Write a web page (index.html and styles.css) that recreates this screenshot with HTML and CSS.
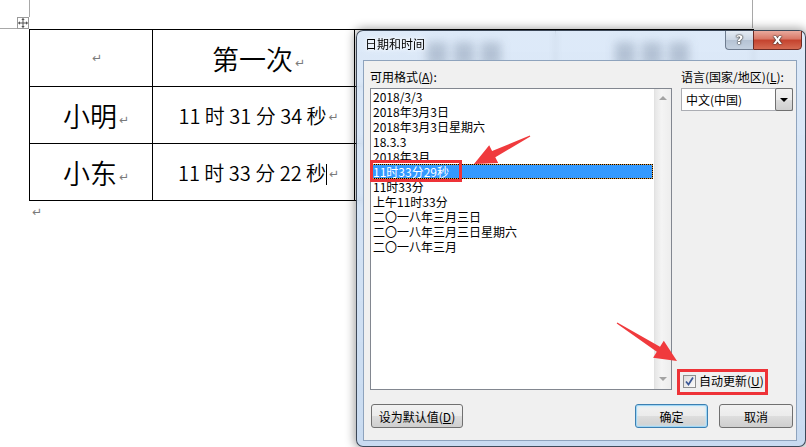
FILE: index.html
```html
<!DOCTYPE html>
<html lang="zh-CN">
<head>
    <meta charset="UTF-8">
    <title>日期和时间</title>
    <link rel="stylesheet" href="styles.css">
</head>
<body>
    <div class="page">
        <div class="margin-line tl-v"></div>
        <div class="margin-line tl-h"></div>
        <div class="margin-line tr-v"></div>

        <div class="table-wrap">
            <div class="move-handle">
                <svg width="10" height="10" viewBox="0 0 10 10">
                    <path d="M5 0.5 V9.5 M0.5 5 H9.5" stroke="#555" stroke-width="1" fill="none"/>
                    <path d="M5 0 L3.3 2 H6.7 Z M5 10 L3.3 8 H6.7 Z M0 5 L2 3.3 V6.7 Z M10 5 L8 3.3 V6.7 Z" fill="#555"/>
                </svg>
            </div>
            <table class="doc-table">
                <colgroup>
                    <col class="c1"><col class="c2"><col class="c3"><col class="c4">
                </colgroup>
                <tr>
                    <td><span class="pm">↵</span></td>
                    <td class="big">第一次<span class="pm">↵</span></td>
                    <td></td>
                    <td></td>
                </tr>
                <tr>
                    <td class="big">小明<span class="pm">↵</span></td>
                    <td class="time">11 时 31 分 34 秒<span class="pm">↵</span></td>
                    <td></td>
                    <td></td>
                </tr>
                <tr>
                    <td class="big">小东<span class="pm">↵</span></td>
                    <td class="time">11 时 33 分 22 秒<span class="caret"></span><span class="pm">↵</span></td>
                    <td></td>
                    <td></td>
                </tr>
            </table>
        </div>
        <p class="after">↵</p>
    </div>

    <div class="dialog">
        <div class="titlebar">
            <span class="ghost ghost-a"></span>
            <span class="ghost ghost-b"></span>
            <span class="title">日期和时间</span>
            <div class="caption">
                <span class="cap help">?</span>
                <span class="cap close">x</span>
            </div>
        </div>
        <div class="client">
            <div class="columns">
                <div class="col-left">
                    <div class="label">可用格式(<u>A</u>):</div>
                    <div class="listbox">
                        <ul class="items">
                            <li>2018/3/3</li>
                            <li>2018年3月3日</li>
                            <li>2018年3月3日星期六</li>
                            <li>18.3.3</li>
                            <li>2018年3月</li>
                            <li class="sel">11时33分29秒</li>
                            <li>11时33分</li>
                            <li>上午11时33分</li>
                            <li>二〇一八年三月三日</li>
                            <li>二〇一八年三月三日星期六</li>
                            <li>二〇一八年三月</li>
                        </ul>
                        <div class="vscroll">
                            <span class="arrow-up"></span>
                            <span class="arrow-down"></span>
                        </div>
                    </div>
                </div>
                <div class="col-right">
                    <div class="label">语言(国家/地区)(<u>L</u>):</div>
                    <div class="combo">
                        <span class="combo-text">中文(中国)</span>
                        <span class="drop"><span class="drop-arrow"></span></span>
                    </div>
                    <div class="check">
                        <span class="checkbox">
                            <svg width="11" height="11" viewBox="0 0 11 11">
                                <path d="M2 5.5 L4.5 8.5 L9 1.5" stroke="#3a5796" stroke-width="1.7" fill="none"/>
                            </svg>
                        </span>
                        <span>自动更新(<u>U</u>)</span>
                    </div>
                </div>
            </div>
            <div class="buttons">
                <span class="btn btn-wide">设为默认值(<u>D</u>)</span>
                <span class="btn btn-ok">确定</span>
                <span class="btn btn-cancel">取消</span>
            </div>
        </div>
    </div>

    <div class="callout callout-sel"></div>
    <div class="callout callout-check"></div>
    <svg class="arrows" width="806" height="447" viewBox="0 0 806 447">
        <polygon points="529.8,135.6 492.1,151.1 489.2,145.3 474,164 498.2,163.1 495.3,157.3 530.3,136.5" />
        <polygon points="617.3,322.6 660,346.7 663.8,340.8 677,361 653.1,357.7 656.8,351.7 616.7,323.4" />
    </svg>
</body>
</html>
```

FILE: styles.css
```css
* {
    box-sizing: border-box;
}

body {
    margin: 0;
    width: 806px;
    height: 447px;
    overflow: hidden;
    position: relative;
    background: #fff;
    font-family: "Noto Sans CJK SC", sans-serif;
    color: #000;
}

/* ---- document ---- */

.page {
    padding: 29px 0 0 29px;
}

.margin-line {
    position: absolute;
    background: #a8a8a8;
}

.tl-v { left: 29px; top: 0; width: 1px; height: 17px; }
.tl-h { left: 0; top: 28px; width: 17px; height: 1px; }
.tr-v { left: 752px; top: 0; width: 1px; height: 28px; }

.table-wrap {
    position: relative;
    width: 724px;
}

.move-handle {
    position: absolute;
    left: -12px;
    top: -12px;
    width: 12px;
    height: 12px;
    border: 1px solid #9a9a9a;
    background: #fff;
    display: flex;
    align-items: center;
    justify-content: center;
}

.doc-table {
    border-collapse: collapse;
    table-layout: fixed;
    width: 724px;
}

.c1 { width: 123px; }
.c2 { width: 202px; }
.c3 { width: 201px; }
.c4 { width: 198px; }

.doc-table td {
    border: 1px solid #000;
    height: 57px;
    padding: 0;
    text-align: center;
    vertical-align: middle;
    white-space: nowrap;
    font-weight: 350;
}

.big {
    font-size: 27px;
}

.time {
    font-size: 20px;
}

.pm {
    display: inline-block;
    width: 0;
    font-family: "DejaVu Sans", sans-serif;
    font-weight: normal;
    font-size: 12px;
    line-height: 12px;
    color: #7a7a7a;
    padding-left: 2px;
    vertical-align: 3px;
}

.caret {
    display: inline-block;
    width: 0;
    height: 21px;
    border-left: 1px solid #000;
    vertical-align: -4px;
}

.after {
    margin: 5px 0 0 3px;
    font-family: "DejaVu Sans", sans-serif;
    font-size: 12px;
    line-height: 12px;
    color: #7a7a7a;
}

/* ---- dialog ---- */

.dialog {
    position: absolute;
    left: 356px;
    top: 30px;
    width: 450px;
    height: 417px;
    border: 1px solid rgba(25, 35, 50, 0.8);
    border-radius: 7px;
    background: linear-gradient(to bottom, rgba(214, 229, 247, 0.82), rgba(192, 213, 238, 0.86));
    backdrop-filter: blur(3px);
    box-shadow: 0 0 10px 2px rgba(0, 0, 0, 0.35);
    display: flex;
    flex-direction: column;
    font-size: 12px;
}

.titlebar {
    position: relative;
    height: 29px;
    display: flex;
    align-items: flex-start;
    padding: 0 3px 0 8px;
    overflow: hidden;
}

/* blurred shapes of the document seen through the glass */
.ghost {
    position: absolute;
    top: 11px;
    width: 74px;
    height: 24px;
    background: repeating-linear-gradient(to right, rgba(50, 70, 100, 0.24) 0 20px, transparent 20px 27px);
    filter: blur(5px);
}

.ghost-a { left: 70px; }
.ghost-b { left: 258px; }

.title {
    position: relative;
    flex: 1;
    margin-top: 5px;
    line-height: 16px;
    text-shadow: 0 0 6px #fff, 0 0 3px #fff;
}

.caption {
    position: relative;
    display: flex;
    margin-top: -2px;
}

.cap {
    height: 21px;
    display: flex;
    align-items: center;
    justify-content: center;
    font-family: "DejaVu Sans", sans-serif;
    font-weight: bold;
    color: #fff;
    text-shadow: 0 0 1px #2a2a2a, 0 0 1px #2a2a2a, 0 0 2px #444;
}

.help {
    width: 28px;
    font-size: 13px;
    border: 1px solid #6f7d90;
    border-right: none;
    border-radius: 0 0 0 4px;
    background: linear-gradient(to bottom, #e6edf5 0%, #ccd7e4 50%, #b4c2d3 51%, #c4d1e0 100%);
}

.close {
    width: 49px;
    font-size: 14px;
    padding-bottom: 2px;
    border: 1px solid #6e2b24;
    border-radius: 0 0 4px 0;
    background: linear-gradient(to bottom, #ebb0a4 0%, #d97a69 45%, #c5442f 55%, #d56a52 100%);
}

.client {
    flex: 1;
    margin: 0 8px 5px 6px;
    background: #f0f0f0;
    border: 1px solid #8ea3bd;
    padding: 8px 3px 12px 6px;
    display: flex;
    flex-direction: column;
}

.columns {
    display: grid;
    grid-template-columns: 302px 112px;
    column-gap: 9px;
}

.label {
    line-height: 16px;
    margin-bottom: 3px;
    white-space: nowrap;
}

.listbox {
    height: 302px;
    border: 1px solid #828790;
    background: #fff;
    display: flex;
}

.items {
    flex: 1;
    list-style: none;
    margin: 0;
    padding: 0;
}

.items li {
    height: 15px;
    line-height: 13px;
    margin: 0 1px;
    border: 1px solid transparent;
    white-space: nowrap;
}

.items li.sel {
    color: #fff;
    border: 1px dotted #000;
    background: linear-gradient(#3399ff, #3399ff) padding-box, linear-gradient(#e29a3a, #e29a3a) border-box;
}

.vscroll {
    width: 17px;
    background: linear-gradient(to right, #e6e6e6, #f4f4f4 40%, #ededed);
    border-left: 1px solid #e2e2e2;
    display: flex;
    flex-direction: column;
    justify-content: space-between;
    align-items: center;
    padding: 7px 0 8px;
}

.arrow-up {
    width: 0;
    height: 0;
    border-left: 4px solid transparent;
    border-right: 4px solid transparent;
    border-bottom: 4px solid #a3a3a3;
}

.arrow-down {
    width: 0;
    height: 0;
    border-left: 4px solid transparent;
    border-right: 4px solid transparent;
    border-top: 4px solid #a3a3a3;
}

.col-right {
    display: flex;
    flex-direction: column;
}

.combo {
    height: 23px;
    border: 1px solid #abadb3;
    background: #fff;
    display: flex;
}

.combo-text {
    flex: 1;
    padding-left: 4px;
    line-height: 21px;
}

.drop {
    width: 18px;
    margin: -1px -1px -1px 0;
    border: 1px solid #707070;
    border-radius: 2px;
    background: linear-gradient(to bottom, #f2f2f2 0%, #ebebeb 50%, #dddddd 51%, #cfcfcf 100%);
    display: flex;
    align-items: center;
    justify-content: center;
}

.drop-arrow {
    width: 0;
    height: 0;
    border-left: 4px solid transparent;
    border-right: 4px solid transparent;
    border-top: 4px solid #000;
}

.check {
    margin-top: auto;
    margin-bottom: 1px;
    padding-left: 2px;
    display: flex;
    align-items: center;
    gap: 3px;
    line-height: 16px;
    white-space: nowrap;
}

.checkbox {
    width: 13px;
    height: 13px;
    border: 1px solid #8e8f8f;
    background: linear-gradient(135deg, #dcdcdc, #fbfbfb);
    display: flex;
    align-items: center;
    justify-content: center;
}

.buttons {
    margin-top: 14px;
    padding-left: 1px;
    display: flex;
}

.btn {
    height: 24px;
    border: 1px solid #707070;
    border-radius: 3px;
    background: linear-gradient(to bottom, #f2f2f2 0%, #ebebeb 50%, #dddddd 51%, #cfcfcf 100%);
    display: flex;
    align-items: center;
    justify-content: center;
    white-space: nowrap;
}

.btn-wide {
    width: 92px;
}

.btn-ok {
    width: 73px;
    margin-left: auto;
    border-color: #3c7fb1;
    box-shadow: inset 0 0 0 1px #9fd6f5, inset 0 0 3px 1px #c4e7fa;
}

.btn-cancel {
    width: 74px;
    margin-left: 11px;
}

/* ---- annotations ---- */

.callout {
    position: absolute;
    border: 3px solid #ee3338;
}

.callout-sel {
    left: 370px;
    top: 160px;
    width: 92px;
    height: 22px;
}

.callout-check {
    left: 677px;
    top: 369px;
    width: 91px;
    height: 26px;
}

.arrows {
    position: absolute;
    left: 0;
    top: 0;
    pointer-events: none;
    fill: #f03a3d;
}
```
